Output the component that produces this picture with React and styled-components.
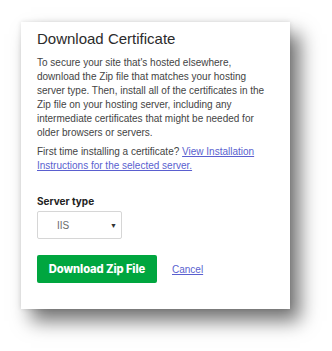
import React from "react";
import styled, { createGlobalStyle } from "styled-components";

const Global = createGlobalStyle`
  html, body { margin: 0; padding: 0; background: #ffffff; }
  body { font-family: "Liberation Sans", Arial, sans-serif; }
`;

const Page = styled.div`
  padding: 22px 0 0 21px;
  height: 351px;
  box-sizing: border-box;
`;

const Card = styled.section`
  width: 269px;
  height: 287px;
  box-sizing: border-box;
  background: #ffffff;
  padding: 8px 20px 0 16px;
  display: flex;
  flex-direction: column;
  box-shadow: 10px 12px 18px rgba(0, 0, 0, 0.55), 0 0 5px rgba(0, 0, 0, 0.12);
`;

const Title = styled.h2`
  margin: 0 0 8px;
  font-family: "Liberation Sans", Arial, sans-serif;
  font-weight: 400;
  font-size: 15px;
  line-height: 18px;
  color: #2b2b2b;
`;

const Text = styled.p`
  margin: 0 0 ${(p) => p.$gap || 0}px;
  width: 232px;
  font-size: 10px;
  line-height: 14px;
  color: #444444;
`;

const Link = styled.a`
  color: #5a5fcf;
  text-decoration: underline;
  cursor: pointer;
`;

const Label = styled.label`
  display: block;
  margin: 22px 0 3px;
  font-family: Inter, "Liberation Sans", sans-serif;
  font-weight: 700;
  font-size: 10px;
  line-height: 13px;
  color: #222;
`;

const SelectBox = styled.div`
  width: 85px;
  height: 28px;
  box-sizing: border-box;
  border: 1px solid #d6d6d6;
  border-radius: 2px;
  display: flex;
  align-items: center;
  justify-content: space-between;
  padding: 0 4px 0 19px;
  font-size: 10px;
  color: #6b6b6b;
`;

const Arrow = styled.span`
  font-size: 7px;
  color: #333;
  line-height: 1;
`;

const Actions = styled.div`
  margin-top: 16px;
  display: flex;
  align-items: center;
  gap: 15px;
`;

const Button = styled.button`
  width: 120px;
  height: 28px;
  border: none;
  border-radius: 2px;
  background: #00a63f;
  color: #ffffff;
  font-family: Inter, "Liberation Sans", sans-serif;
  font-weight: 800;
  font-size: 11.2px;
  letter-spacing: -0.1px;
  padding: 0;
  cursor: pointer;
`;

const CancelLink = styled(Link)`
  font-size: 10px;
`;

export default function App() {
  return (
    <>
      <Global />
      <Page>
        <Card>
          <Title>Download Certificate</Title>
          <Text $gap={5}>
            To secure your site that's hosted elsewhere, download the Zip file
            that matches your hosting server type. Then, install all of the
            certificates in the Zip file on your hosting server, including any
            intermediate certificates that might be needed for older browsers
            or servers.
          </Text>
          <Text>
            First time installing a certificate?{" "}
            <Link>View Installation Instructions for the selected server.</Link>
          </Text>
          <Label>Server type</Label>
          <SelectBox>
            <span>IIS</span>
            <Arrow>▼</Arrow>
          </SelectBox>
          <Actions>
            <Button>Download Zip File</Button>
            <CancelLink>Cancel</CancelLink>
          </Actions>
        </Card>
      </Page>
    </>
  );
}
